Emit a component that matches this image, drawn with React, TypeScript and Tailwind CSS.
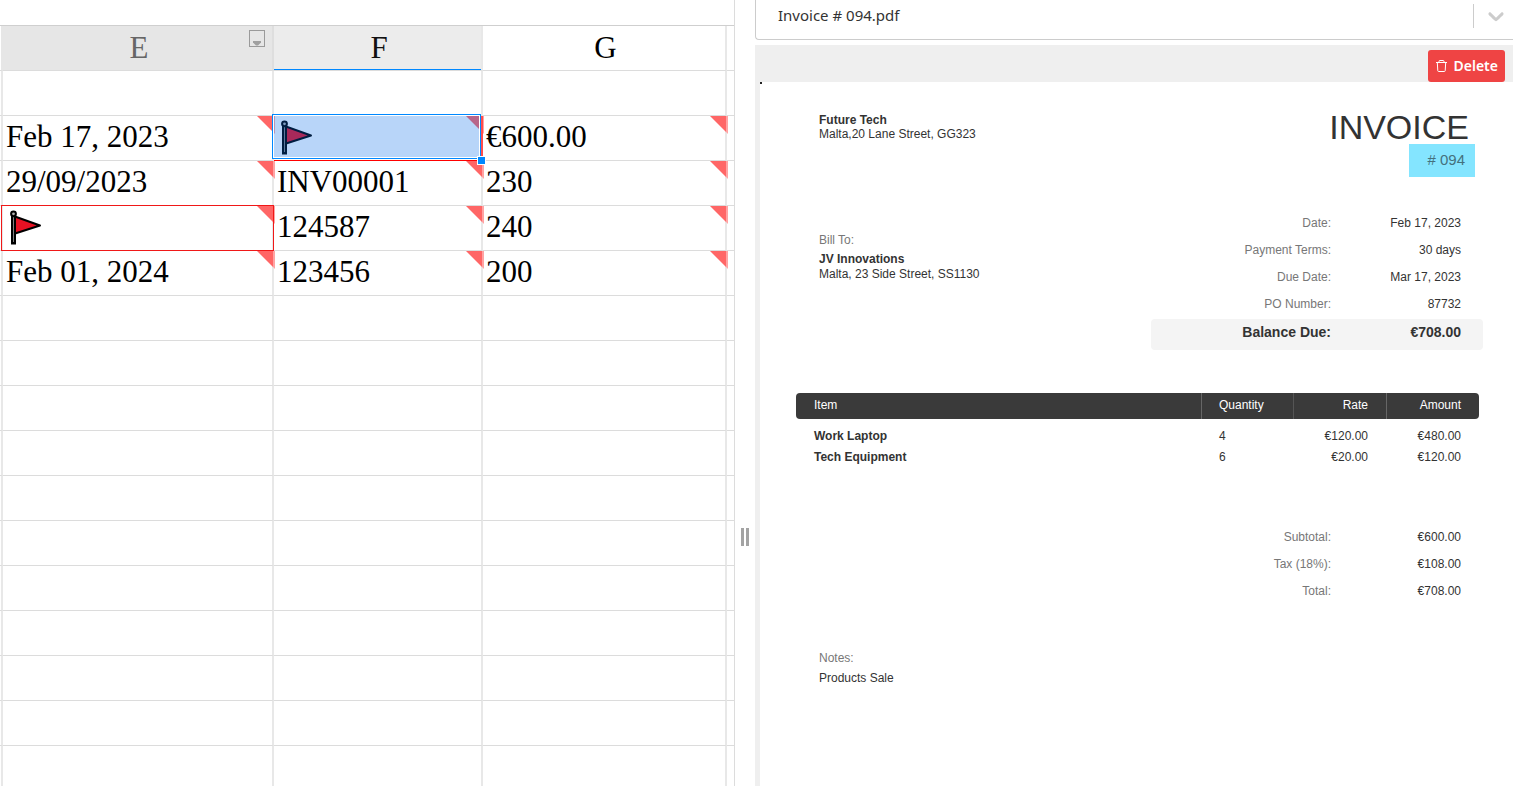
import React from "react";

type Mark = "flag" | "selected" | null;
type Cell = { text?: string; mark?: Mark };

const rows: Cell[][] = [
  [{}, {}, {}],
  [{ text: "Feb 17, 2023" }, { mark: "selected" }, { text: "€600.00" }],
  [{ text: "29/09/2023" }, { text: "INV00001" }, { text: "230" }],
  [{ mark: "flag" }, { text: "124587" }, { text: "240" }],
  [{ text: "Feb 01, 2024" }, { text: "123456" }, { text: "200" }],
  ...Array.from({ length: 11 }, () => [{}, {}, {}] as Cell[]),
];

function Flag() {
  return (
    <svg width="36" height="36" viewBox="0 0 36 36" className="block" role="img" aria-label="Flagged">
      <path d="M5.5 7 L32 16.5 L5.5 25 Z" fill="#e81123" stroke="#000" strokeWidth="2" strokeLinejoin="round" />
      <rect x="4" y="6" width="3" height="28.5" fill="#808080" stroke="#000" strokeWidth="2" />
      <circle cx="5.5" cy="4.8" r="2.4" fill="#b0b0b0" stroke="#000" strokeWidth="2" />
    </svg>
  );
}

function Corner() {
  return (
    <svg width="18" height="18" viewBox="0 0 18 18" className="absolute -right-[3px] top-0 z-10" aria-hidden="true">
      <path d="M0 0H16V16Z" fill="#ff6666" />
      <path d="M16 0H18V18L16 16Z" fill="#ffa3a3" />
    </svg>
  );
}

function SheetCell({ cell }: { cell: Cell }) {
  const filled = Boolean(cell.text || cell.mark);
  return (
    <td className="relative h-[45px] border-b border-r-2 border-b-[#dcdcdc] border-r-[#e8e8e8] p-0 pb-0.5 pl-[3px] align-middle">
      {cell.text}
      {cell.mark && (
        <div className="pl-0.5">
          <Flag />
        </div>
      )}
      {filled && <Corner />}
      {cell.mark === "flag" && (
        <div className="absolute -bottom-px -left-[2px] -right-[2px] -top-px z-20 border border-[#f01818]" />
      )}
      {cell.mark === "selected" && (
        <>
          <div className="absolute -bottom-px -right-[2px] left-0 top-0 z-10 border-b border-r-2 border-b-[#ff0000] border-r-[#ff4d4d]" />
          <div className="absolute -left-[2px] -top-[2px] bottom-px right-0 z-20 border border-[#0088ff]">
            <div className="h-full border border-white bg-[#0068e8]/28" />
          </div>
          <div className="absolute -bottom-[5px] -right-[5px] z-30 size-[9px] border border-white bg-[#0088ff]" />
        </>
      )}
    </td>
  );
}

function Sheet() {
  return (
    <section className="overflow-hidden border-r border-[#dcdcdc] pt-[25px]">
      <div className="border-t border-[#cfcfcf]">
        <table className="w-full table-fixed border-separate border-spacing-0 text-left font-['Liberation_Serif',serif] text-[31px] leading-9 text-black">
          <colgroup>
            <col className="w-[3px]" />
            <col className="w-[271px]" />
            <col className="w-[209px]" />
            <col />
            <col className="w-[7px]" />
          </colgroup>
          <thead>
            <tr className="text-center">
              <td className="h-[45px] border-b border-r-2 border-b-[#dcdcdc] border-r-[#e6e6e6] p-0" />
              <th className="relative border-b border-r-2 border-b-[#dcdcdc] border-r-[#dedede] bg-[#e6e6e6] p-0 pl-[3px] text-center font-normal text-[#666]">
                E
                <button type="button" aria-label="Column E menu" className="absolute right-[7px] top-1">
                  <svg width="16" height="17" viewBox="0 0 16 17" className="block">
                    <rect x="0.5" y="0.5" width="15" height="16" fill="none" stroke="#9a9a9a" />
                    <path d="M4 11H12V12.5L9 15.5H7L4 12.5Z" fill="#a0a0a0" />
                  </svg>
                </button>
              </th>
              <th className="relative border-b border-r-2 border-b-[#dcdcdc] border-r-[#e8e8e8] bg-[#ececec] p-0 pl-[3px] text-center font-normal text-[#111]">
                F
                <div className="absolute inset-x-0 bottom-0 h-px bg-[#0088ff]" />
              </th>
              <th className="border-b border-r-2 border-b-[#dcdcdc] border-r-[#e8e8e8] p-0 pl-[3px] text-center font-normal">G</th>
              <td className="border-b border-[#dcdcdc] p-0" />
            </tr>
          </thead>
          <tbody>
            {rows.map((row, i) => (
              <tr key={i}>
                <td className="h-[45px] border-b border-r-2 border-b-[#dcdcdc] border-r-[#e8e8e8] p-0" />
                {row.map((cell, j) => (
                  <SheetCell key={j} cell={cell} />
                ))}
                <td className="border-b border-[#dcdcdc] p-0" />
              </tr>
            ))}
          </tbody>
        </table>
      </div>
    </section>
  );
}

const meta = [
  ["Date:", "Feb 17, 2023"],
  ["Payment Terms:", "30 days"],
  ["Due Date:", "Mar 17, 2023"],
  ["PO Number:", "87732"],
];

const totals = [
  ["Subtotal:", "€600.00"],
  ["Tax (18%):", "€108.00"],
  ["Total:", "€708.00"],
];

const items = [
  ["Work Laptop", "4", "€120.00", "€480.00"],
  ["Tech Equipment", "6", "€20.00", "€120.00"],
];

function Pairs({ data }: { data: string[][] }) {
  return (
    <dl className="pr-[22px]">
      {data.map(([label, value]) => (
        <div key={label} className="flex h-[27px] items-center justify-end text-right">
          <dt className="text-[#777]">{label}</dt>
          <dd className="w-[130px]">{value}</dd>
        </div>
      ))}
    </dl>
  );
}

function Invoice() {
  return (
    <article className="relative flex-1 bg-white pl-9 pr-[30px] pt-[27px] font-['Liberation_Sans',sans-serif] text-[12px] leading-[14px] text-[#333]">
      <div className="absolute left-0 top-0 size-0.5 bg-[#222]" />
      <header className="flex justify-between">
        <div className="pl-[23px] pt-1">
          <p className="font-bold">Future Tech</p>
          <p>Malta,20 Lane Street, GG323</p>
          <p className="mt-[92px] text-[#777]">Bill To:</p>
          <p className="mt-[5px] font-bold">JV Innovations</p>
          <p className="mt-px">Malta, 23 Side Street, SS1130</p>
        </div>
        <div className="w-[332px]">
          <div className="flex flex-col items-end pr-2">
            <h1 className="pr-1.5 pt-0.5 text-[34px] leading-[33px]">INVOICE</h1>
            <p className="flex h-[33px] w-[66px] items-center justify-end bg-[#84e5ff] pb-0.5 pr-2.5 text-[15px] text-[#44717d]">
              # 094
            </p>
          </div>
          <div className="pt-8">
            <Pairs data={meta} />
          </div>
          <p className="mt-0.5 flex h-[31px] items-center justify-end rounded bg-[#f4f4f4] pb-1.5 pr-[22px] text-right text-[14px] font-bold">
            <span>Balance Due:</span>
            <span className="w-[130px]">€708.00</span>
          </p>
        </div>
      </header>
      <table className="mr-1 mt-[43px] w-[calc(100%-4px)] table-fixed border-separate border-spacing-0 text-left">
        <colgroup>
          <col />
          <col className="w-[92px]" />
          <col className="w-[93px]" />
          <col className="w-[93px]" />
        </colgroup>
        <thead className="text-white">
          <tr>
            <th className="h-[26px] rounded-l bg-[#3a3a3a] p-0 pb-0.5 pl-[18px] font-normal">Item</th>
            <th className="border-l border-[#666] bg-[#3a3a3a] p-0 pb-0.5 pl-[17px] font-normal">Quantity</th>
            <th className="border-l border-[#555] bg-[#3a3a3a] p-0 pb-0.5 pr-[18px] text-right font-normal">Rate</th>
            <th className="rounded-r border-l border-[#666] bg-[#3a3a3a] p-0 pb-0.5 pr-[18px] text-right font-normal">Amount</th>
          </tr>
        </thead>
        <tbody>
          <tr aria-hidden="true">
            <td className="h-1.5 p-0" />
          </tr>
          {items.map(([name, qty, rate, amount]) => (
            <tr key={name}>
              <td className="h-[21px] p-0 pl-[18px] font-bold">{name}</td>
              <td className="p-0 pl-[18px]">{qty}</td>
              <td className="p-0 pr-[18px] text-right">{rate}</td>
              <td className="p-0 pr-[18px] text-right">{amount}</td>
            </tr>
          ))}
        </tbody>
      </table>
      <div className="mt-14">
        <Pairs data={totals} />
      </div>
      <footer className="mt-[47px] pl-[23px]">
        <p className="text-[#777]">Notes:</p>
        <p className="mt-1.5">Products Sale</p>
      </footer>
    </article>
  );
}

function Viewer() {
  return (
    <section className="flex min-h-0 flex-col overflow-hidden">
      <div className="relative h-10 shrink-0 rounded-bl-[4px] border-b border-l border-[#ccc]">
        <select
          aria-label="Document"
          className="block h-[31px] w-full appearance-none bg-transparent pl-[22px] pr-12 font-['Noto_Sans',sans-serif] text-[15px] text-[#333] outline-none"
        >
          <option>Invoice # 094.pdf</option>
        </select>
        <div className="pointer-events-none absolute right-1 top-[3px] flex items-center gap-[9px]">
          <span className="h-6 w-px bg-[#ccc]" />
          <svg width="26" height="26" viewBox="0 0 20 20" fill="#ccc" aria-hidden="true">
            <path d="M4.516 7.548c0.436-0.446 1.043-0.481 1.576 0l3.908 3.747 3.908-3.747c0.533-0.481 1.141-0.446 1.574 0 0.436 0.445 0.408 1.197 0 1.615-0.406 0.418-4.695 4.502-4.695 4.502-0.217 0.223-0.502 0.335-0.787 0.335s-0.57-0.112-0.789-0.335c0 0-4.287-4.084-4.695-4.502s-0.436-1.17 0-1.615z" />
          </svg>
        </div>
      </div>
      <div className="mt-[5px] flex flex-1 flex-col bg-[#efefef] pl-[5px]">
        <div className="flex h-[37px] items-end justify-end pr-2">
          <button
            type="button"
            className="flex h-8 items-center gap-1.5 rounded-[3px] bg-[#ef4444] px-[7px] pb-0.5 font-['Noto_Sans',sans-serif] text-[14px] font-semibold text-white"
          >
            <svg width="13" height="14" viewBox="0 0 13 14" className="mt-0.5" fill="none" stroke="#fff" strokeLinejoin="round" aria-hidden="true">
              <path d="M1 3.5H12M4 3.5V2.5Q4 1.5 5 1.5H8Q9 1.5 9 2.5V3.5M2.3 3.5L2.8 11.8Q2.9 12.5 3.6 12.5H9.4Q10.1 12.5 10.2 11.8L10.7 3.5" />
            </svg>
            Delete
          </button>
        </div>
        <Invoice />
      </div>
    </section>
  );
}

export default function App() {
  return (
    <main className="grid h-screen grid-cols-[735fr_20fr_758fr] overflow-hidden bg-white">
      <Sheet />
      <div role="separator" aria-orientation="vertical" className="flex cursor-col-resize justify-center gap-0.5 pt-[528px]">
        <span className="h-[18px] w-[3px] bg-[#a3a3a3]" />
        <span className="h-[18px] w-[3px] bg-[#a3a3a3]" />
      </div>
      <Viewer />
    </main>
  );
}
